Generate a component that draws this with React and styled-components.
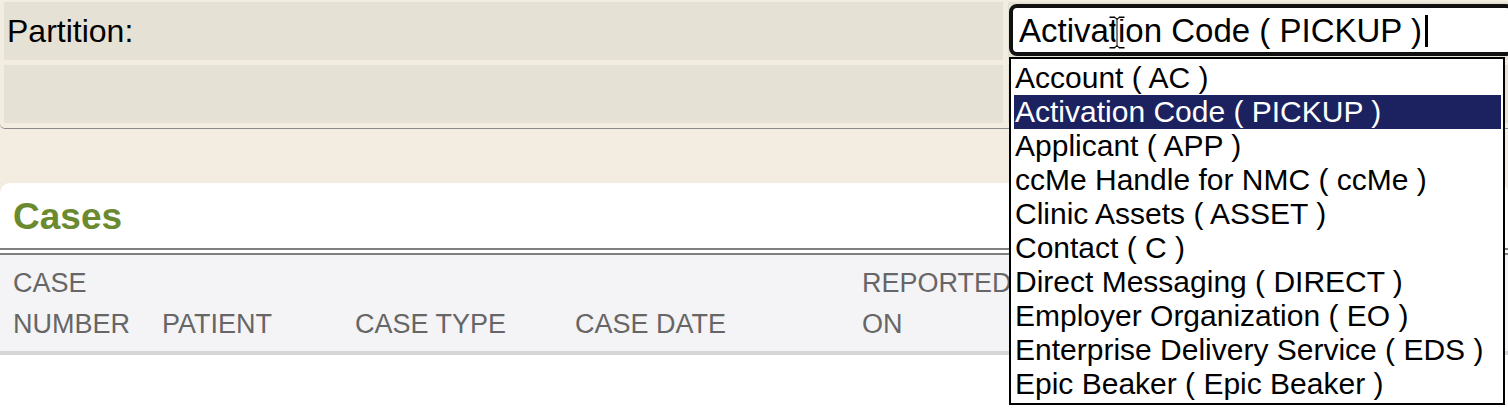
import React from "react";
import styled, { createGlobalStyle } from "styled-components";

const GlobalStyle = createGlobalStyle`
	html, body {
		margin: 0;
		overflow: hidden;
		background: #f3ede1;
		font-family: "Liberation Sans", Arial, sans-serif;
	}
`;

const Page = styled.div`
	position: relative;
	min-height: 409px;
`;

const FilterPanel = styled.div`
	padding: 2px 0 5px 4px;
	border-bottom: 1px solid #8a8a8a;
	border-bottom-left-radius: 5px;
`;

const FilterGrid = styled.div`
	display: grid;
	grid-template-columns: 999px 1fr;
	grid-auto-rows: 58px;
	column-gap: 5px;
	row-gap: 5px;
`;

const Cell = styled.div`
	background: #e5e1d5;
	display: flex;
	align-items: center;
	padding-left: 3px;
	font-size: 32px;
	color: #000;
`;

const InputCell = styled.div`
	padding: 2px 0 0 1px;
	background: #e5e1d5;
`;

const ComboInput = styled.div`
	box-sizing: border-box;
	width: 505px;
	height: 52px;
	border: 4px solid #111;
	border-radius: 8px;
	background: #fff;
	padding: 2px 0 0 6px;
	display: flex;
	align-items: center;
	font-size: 33px;
	color: #000;
	white-space: nowrap;
`;

const Caret = styled.span`
	display: inline-block;
	width: 3px;
	height: 32px;
	margin-left: 3px;
	background: #000;
`;

const Card = styled.section`
	margin-top: 54px;
	background: #fff;
	border-radius: 10px 10px 0 0;
	min-height: 240px;
`;

const Title = styled.h2`
	margin: 0;
	height: 65px;
	line-height: 68px;
	padding-left: 13px;
	font-size: 37px;
	font-weight: bold;
	color: #6b8a2f;
	border-bottom: 7px double #808080;
`;

const HeaderRow = styled.div`
	display: grid;
	grid-template-columns: 149px 193px 220px 287px 160px;
	align-items: end;
	padding: 8px 0 6px 13px;
	background: #f4f4f6;
	border-bottom: 4px solid #d6d6d6;
`;

const HeaderCell = styled.div`
	font-size: 27px;
	line-height: 41px;
	color: #666;
	text-transform: uppercase;
`;

const Dropdown = styled.ul`
	position: absolute;
	left: 1009px;
	top: 57px;
	width: 496px;
	box-sizing: border-box;
	margin: 0;
	padding: 2px 2px 2px 3px;
	list-style: none;
	background: #fff;
	border: 2px solid #000;
`;

const Option = styled.li`
	height: 34px;
	line-height: 34px;
	padding-left: 1px;
	font-size: 30px;
	white-space: nowrap;
	color: ${(p) => (p.$active ? "#fff" : "#000")};
	background: ${(p) => (p.$active ? "#1c2260" : "transparent")};
`;

const Pointer = styled.svg`
	position: absolute;
	left: 1108px;
	top: 15px;
	pointer-events: none;
`;

const columns = ["Case Number", "Patient", "Case Type", "Case Date", "Reported On"];

const options = [
	"Account ( AC )",
	"Activation Code ( PICKUP )",
	"Applicant ( APP )",
	"ccMe Handle for NMC ( ccMe )",
	"Clinic Assets ( ASSET )",
	"Contact ( C )",
	"Direct Messaging ( DIRECT )",
	"Employer Organization ( EO )",
	"Enterprise Delivery Service ( EDS )",
	"Epic Beaker ( Epic Beaker )",
];

export default function App() {
	const selected = "Activation Code ( PICKUP )";

	return (
		<Page>
			<GlobalStyle />
			<FilterPanel>
				<FilterGrid>
					<Cell>Partition:</Cell>
					<InputCell>
						<ComboInput>
							{selected}
							<Caret />
						</ComboInput>
					</InputCell>
					<Cell />
					<Cell />
				</FilterGrid>
			</FilterPanel>

			<Card>
				<Title>Cases</Title>
				<HeaderRow>
					{columns.map((c) => (
						<HeaderCell key={c}>{c}</HeaderCell>
					))}
				</HeaderRow>
			</Card>

			<Dropdown>
				{options.map((o) => (
					<Option key={o} $active={o === selected}>
						{o}
					</Option>
				))}
			</Dropdown>

			{/* mouse I-beam over the input */}
			<Pointer width="18" height="35" viewBox="0 0 18 35">
				<path
					d="M1 1 H6.5 L9 3 L11.5 1 H17 V3.5 H11.5 L10 4.5 V30.5 L11.5 31.5 H17 V34 H11.5 L9 32 L6.5 34 H1 V31.5 H6.5 L8 30.5 V4.5 L6.5 3.5 H1 Z"
					fill="#000"
					stroke="#fff"
					strokeWidth="1"
				/>
			</Pointer>
		</Page>
	);
}
